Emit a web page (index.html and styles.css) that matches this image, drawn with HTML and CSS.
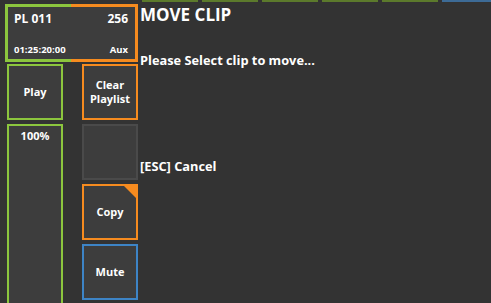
FILE: index.html
```html
<!DOCTYPE html>
<html>
<head>
<meta charset="utf-8">
<link rel="stylesheet" href="styles.css">
</head>
<body>
<div class="app">
  <div class="left">
    <div class="clip-card">
      <div class="clip-inner">
        <div class="clip-row"><span>PL 011</span><span>256</span></div>
        <div class="clip-row small"><span>01:25:20:00</span><span>Aux</span></div>
      </div>
    </div>
    <div class="grid">
      <div class="tile green play">Play</div>
      <div class="tile orange clear">Clear<br>Playlist</div>
      <div class="tile green speed">100%</div>
      <div class="tile empty"></div>
      <div class="tile orange copy">Copy<span class="corner"></span></div>
      <div class="tile blue mute">Mute</div>
    </div>
  </div>
  <div class="right">
    <div class="strip">
      <span class="bar g"></span><span class="bar g"></span><span class="bar g"></span><span class="bar g"></span><span class="bar g"></span><span class="bar b"></span>
    </div>
    <div class="title">MOVE CLIP</div>
    <div class="msg">Please Select clip to move...</div>
    <div class="cancel">[ESC] Cancel</div>
  </div>
</div>
</body>
</html>
```
FILE: styles.css
```css
html, body {
  margin: 0;
  padding: 0;
  background: #333333;
  overflow: hidden;
}
body {
  font-family: "Open Sans", "Noto Sans", sans-serif;
  font-weight: 700;
  color: #ffffff;
  width: 491px;
  height: 303px;
}
.app {
  display: flex;
  height: 303px;
  overflow: hidden;
}
.left {
  width: 140px;
  flex: none;
  padding-top: 4px;
  overflow: hidden;
}
.clip-card {
  margin-left: 5px;
  width: 133px;
  height: 58px;
  box-sizing: border-box;
  padding: 3px;
  background: linear-gradient(to right, #8cc63e 0 50%, #f68b1f 50% 100%);
}
.clip-inner {
  background: #3d3d3d;
  height: 100%;
  box-sizing: border-box;
  padding: 4px 7px 3px 6px;
  display: flex;
  flex-direction: column;
  justify-content: space-between;
}
.clip-row {
  display: flex;
  justify-content: space-between;
  font-size: 12px;
  line-height: 16px;
}
.clip-row.small {
  font-size: 9.5px;
  line-height: 12px;
}
.grid {
  margin-top: 2px;
  margin-left: 7px;
  display: grid;
  grid-template-columns: 56px 56px;
  grid-auto-rows: 56px;
  column-gap: 19px;
  row-gap: 4px;
}
.tile {
  position: relative;
  background: #3d3d3d;
  box-sizing: border-box;
  border: 2px solid #4a4a4a;
  display: flex;
  align-items: center;
  justify-content: center;
  text-align: center;
  font-size: 11px;
  line-height: 14px;
}
.green { border-color: #8cc63e; }
.orange { border-color: #f68b1f; }
.blue { border-color: #3d84c6; }
.play { grid-column: 1; grid-row: 1; }
.clear { grid-column: 2; grid-row: 1; }
.speed {
  grid-column: 1;
  grid-row: 2 / span 4;
  align-items: flex-start;
  padding-top: 3px;
}
.empty { grid-column: 2; grid-row: 2; }
.copy { grid-column: 2; grid-row: 3; }
.mute { grid-column: 2; grid-row: 4; }
.corner {
  position: absolute;
  top: 0;
  right: 0;
  width: 0;
  height: 0;
  border-top: 12px solid #f68b1f;
  border-left: 12px solid transparent;
}
.right {
  flex: 1;
  padding-left: 0;
}
.strip {
  display: flex;
  gap: 4px;
  margin-left: 2px;
  height: 2px;
}
.bar {
  width: 56px;
  height: 2px;
  flex: none;
}
.bar.g { background: #5c7a2c; }
.bar.b { background: #3d6b96; }
.title {
  font-size: 17px;
  line-height: 20px;
  margin-top: 3px;
}
.msg {
  font-size: 12.8px;
  line-height: 16px;
  margin-top: 27px;
}
.cancel {
  font-size: 12.8px;
  line-height: 16px;
  margin-top: 90px;
}
```
